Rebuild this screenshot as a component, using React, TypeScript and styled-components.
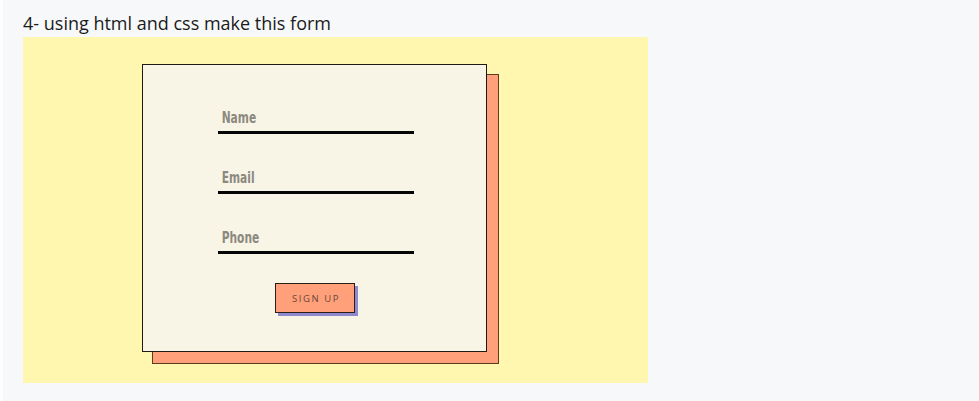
import styled, { createGlobalStyle } from "styled-components";

const GlobalStyle = createGlobalStyle`
  html, body {
    margin: 0;
    padding: 0;
    background: #f7f8fa;
  }
  body {
    font-family: "Open Sans", "Noto Sans", sans-serif;
  }
`;

const Page = styled.div`
  height: 401px;
  padding: 13px 0 0 23px;
  box-sizing: border-box;
  border-left: 3px solid #fdfdfe;
`;

const Title = styled.h2`
  margin: 0 0 4px -3px;
  font-size: 18px;
  font-weight: 400;
  line-height: 20px;
  color: #1b1b1b;
`;

const Canvas = styled.div`
  width: 625px;
  height: 346px;
  margin-left: -3px;
  background: #fff6b0;
  padding: 27px 0 0 119px;
  box-sizing: border-box;
`;

const Card = styled.form`
  width: 345px;
  height: 288px;
  box-sizing: border-box;
  background: #f8f4e6;
  border: 1px solid #1e1a14;
  box-shadow: 11px 11px 0 0 #ffa07a, 11px 11px 0 1px #5b3d1e;
  display: flex;
  flex-direction: column;
  padding: 41px 0 0 75px;
`;

const Field = styled.label`
  display: flex;
  flex-direction: column;
  width: 196px;
  margin-bottom: 32px;
`;

const Label = styled.span`
  font-family: "Liberation Sans Narrow", "DejaVu Sans Condensed", "Roboto", sans-serif;
  font-weight: 700;
  font-size: 16px;
  line-height: 20px;
  margin-top: 2px;
  color: #8c897f;
  padding-left: 5px;
  transform: scaleX(0.74);
  transform-origin: left;
`;

const Line = styled.input`
  border: none;
  border-bottom: 3px solid #050505;
  background: transparent;
  height: 3px;
  padding: 0;
  outline: none;
`;

const Button = styled.button`
  align-self: flex-start;
  margin: -3px 0 0 57px;
  width: 80px;
  height: 30px;
  background: #ffa07a;
  border: 1px solid #2a1f18;
  box-shadow: 3px 3px 0 #8f8ad0;
  font-family: "Open Sans", "Noto Sans", sans-serif;
  font-size: 9.5px;
  letter-spacing: 1.6px;
  color: #6b4638;
  padding: 0 0 0 2px;
`;

export default function App() {
  return (
    <>
      <GlobalStyle />
      <Page>
        <Title>4- using html and css make this form</Title>
        <Canvas>
          <Card>
            <Field>
              <Label>Name</Label>
              <Line type="text" />
            </Field>
            <Field>
              <Label>Email</Label>
              <Line type="email" />
            </Field>
            <Field>
              <Label>Phone</Label>
              <Line type="tel" />
            </Field>
            <Button type="button">SIGN UP</Button>
          </Card>
        </Canvas>
      </Page>
    </>
  );
}
